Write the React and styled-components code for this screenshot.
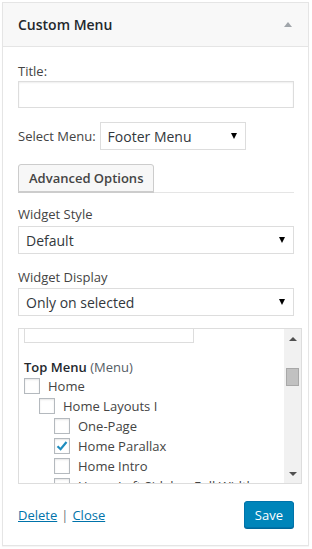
import React from 'react';
import styled, { createGlobalStyle } from 'styled-components';

const GlobalStyle = createGlobalStyle`
  * { box-sizing: border-box; }
  body {
    margin: 0;
    background: #fff;
    font-family: 'Open Sans', 'Liberation Sans', sans-serif;
    font-size: 13px;
    color: #444;
  }
`;

const Page = styled.div`
  padding: 2px 3px 3px 2px;
`;

const Panel = styled.div`
  border: 1px solid #e5e5e5;
  background: #fff;
  box-shadow: 0 1px 1px rgba(0, 0, 0, 0.04);
`;

const Header = styled.div`
  display: flex;
  align-items: center;
  justify-content: space-between;
  height: 44px;
  padding: 0 15px;
  background: #f8f8f8;
  border-bottom: 1px solid #e5e5e5;
`;

const HeaderTitle = styled.h3`
  margin: 0;
  font-size: 14px;
  font-weight: 600;
  color: #23282d;
`;

const Toggle = styled.span`
  width: 0;
  height: 0;
  margin-right: 1px;
  border-left: 4px solid transparent;
  border-right: 4px solid transparent;
  border-bottom: 5px solid #a0a5aa;
`;

const Body = styled.div`
  padding: 15px 14px 17px 15px;
`;

const Label = styled.label`
  display: block;
  line-height: 18px;
  margin-top: ${({ top }) => top || 0}px;
`;

const TextInput = styled.div`
  height: 27px;
  margin-top: 1px;
  border: 1px solid #ddd;
  box-shadow: inset 0 1px 2px rgba(0, 0, 0, 0.07);
  background: #fff;
`;

const InlineRow = styled.div`
  display: flex;
  align-items: center;
  gap: 4px;
  margin-top: 14px;
`;

const Select = styled.div`
  display: flex;
  align-items: center;
  justify-content: space-between;
  width: ${({ width }) => (width ? `${width}px` : '100%')};
  height: 28px;
  margin-top: ${({ top }) => top || 0}px;
  padding: 0 8px 0 7px;
  border: 1px solid #ddd;
  background: #fff;
  font-size: 14px;
  color: #32373c;
`;

const Caret = styled.span`
  width: 0;
  height: 0;
  border-left: 3px solid transparent;
  border-right: 3px solid transparent;
  border-top: 6px solid #000;
`;

const TabRow = styled.div`
  display: flex;
  margin-top: 14px;
  border-bottom: 1px solid #e5e5e5;
`;

const TabButton = styled.button`
  height: 28px;
  padding: 0 10px;
  border: 1px solid #ccc;
  border-radius: 3px 3px 0 0;
  background: #f7f7f7;
  box-shadow: 0 1px 0 #ccc;
  font-family: inherit;
  font-size: 13px;
  font-weight: 600;
  color: #444;
`;

const Checklist = styled.div`
  display: flex;
  width: 284px;
  height: 156px;
  margin-top: 12px;
  border: 1px solid #ddd;
  background: #fff;
`;

const ListContent = styled.div`
  flex: 1;
  overflow: hidden;
  padding: 0 0 0 5px;
`;

const SearchBox = styled.div`
  width: 170px;
  height: 26px;
  margin-top: -12px;
  border: 1px solid #ddd;
`;

const GroupTitle = styled.div`
  margin-top: 15px;
  line-height: 18px;
  font-weight: 600;
  color: #23282d;
  span {
    font-weight: 400;
    color: #555d66;
  }
`;

const Item = styled.div`
  display: flex;
  align-items: center;
  gap: 8px;
  height: 20px;
  padding-left: ${({ level }) => level * 15}px;
  color: #444;
  white-space: nowrap;
`;

const Box = styled.span`
  flex: none;
  display: flex;
  align-items: center;
  justify-content: center;
  width: 16px;
  height: 16px;
  border: 1px solid #b4b9be;
  background: #fff;
  box-shadow: inset 0 1px 2px rgba(0, 0, 0, 0.1);
`;

const Scrollbar = styled.div`
  display: flex;
  flex-direction: column;
  align-items: center;
  width: 17px;
  background: #f1f1f1;
`;

const ArrowUp = styled.span`
  margin-top: 8px;
  border-left: 4px solid transparent;
  border-right: 4px solid transparent;
  border-bottom: 4px solid #505050;
`;

const Thumb = styled.span`
  width: 13px;
  height: 18px;
  margin-top: 27px;
  background: #c1c1c1;
  border: 1px solid #a8a8a8;
`;

const ArrowDown = styled.span`
  margin-top: auto;
  margin-bottom: 7px;
  border-left: 4px solid transparent;
  border-right: 4px solid transparent;
  border-top: 4px solid #505050;
`;

const Footer = styled.div`
  display: flex;
  align-items: center;
  justify-content: space-between;
  margin-top: 17px;
`;

const Links = styled.div`
  display: flex;
  gap: 4px;
  color: #72777c;
  a {
    color: #0073aa;
    text-decoration: underline;
  }
`;

const SaveButton = styled.button`
  height: 27px;
  padding: 0 10px;
  border: 1px solid #0073aa;
  border-radius: 3px;
  background: #0085ba;
  box-shadow: 0 1px 0 #006799;
  color: #fff;
  font-family: inherit;
  font-size: 13px;
`;

const Check = () => (
  <svg width="14" height="14" viewBox="0 0 14 14">
    <path d="M2.5 7.2 L5.6 10.2 L11.5 3" fill="none" stroke="#1e8cbe" strokeWidth="2.2" />
  </svg>
);

const items = [
  { label: 'Home', level: 0 },
  { label: 'Home Layouts I', level: 1 },
  { label: 'One-Page', level: 2 },
  { label: 'Home Parallax', level: 2, checked: true },
  { label: 'Home Intro', level: 2 },
  { label: 'Home Left Sidebar Full Width', level: 2 },
];

export default function App() {
  return (
    <Page>
      <GlobalStyle />
      <Panel>
        <Header>
          <HeaderTitle>Custom Menu</HeaderTitle>
          <Toggle />
        </Header>
        <Body>
          <Label>Title:</Label>
          <TextInput />
          <InlineRow>
            <span>Select Menu:</span>
            <Select width={146}>
              Footer Menu
              <Caret />
            </Select>
          </InlineRow>
          <TabRow>
            <TabButton>Advanced Options</TabButton>
          </TabRow>
          <Label top={12}>Widget Style</Label>
          <Select top={3}>
            Default
            <Caret />
          </Select>
          <Label top={14}>Widget Display</Label>
          <Select top={2}>
            Only on selected
            <Caret />
          </Select>
          <Checklist>
            <ListContent>
              <SearchBox />
              <GroupTitle>
                Top Menu <span>(Menu)</span>
              </GroupTitle>
              {items.map(({ label, level, checked }) => (
                <Item key={label} level={level}>
                  <Box>{checked && <Check />}</Box>
                  {label}
                </Item>
              ))}
            </ListContent>
            <Scrollbar>
              <ArrowUp />
              <Thumb />
              <ArrowDown />
            </Scrollbar>
          </Checklist>
          <Footer>
            <Links>
              <a>Delete</a>|<a>Close</a>
            </Links>
            <SaveButton>Save</SaveButton>
          </Footer>
        </Body>
      </Panel>
    </Page>
  );
}
